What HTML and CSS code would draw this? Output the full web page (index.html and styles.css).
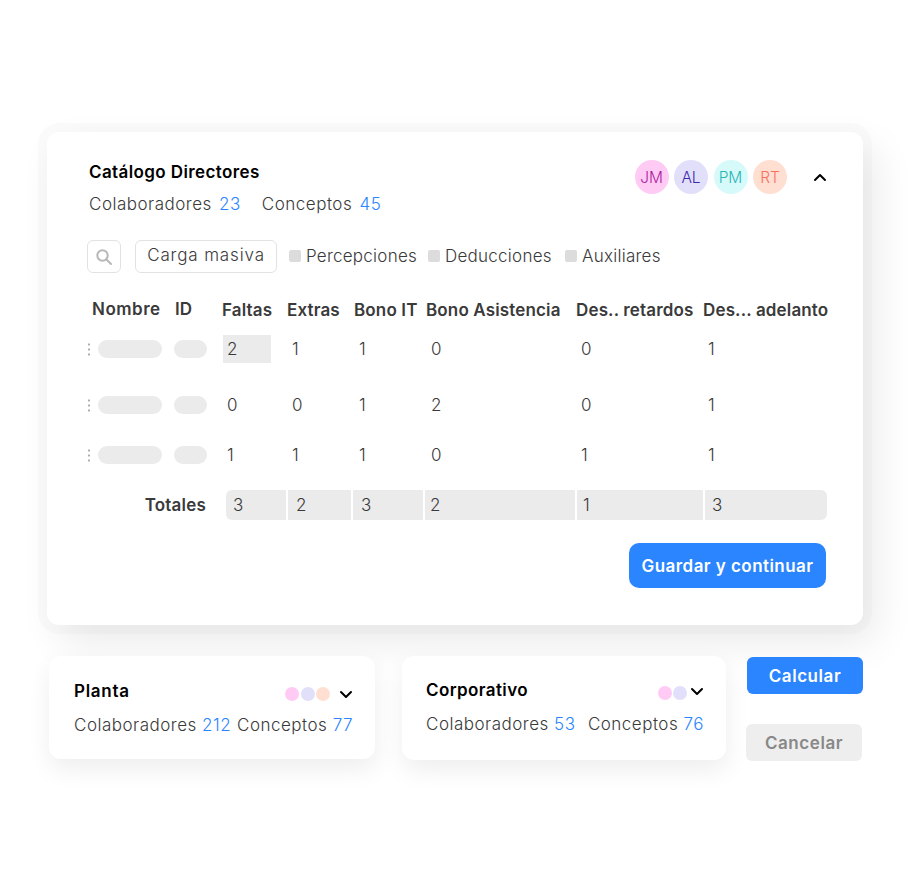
FILE: index.html
```html
<!DOCTYPE html>
<html lang="es">
<head>
    <meta charset="UTF-8">
    <meta name="viewport" content="width=device-width, initial-scale=1.0">
    <title>Catálogo Directores</title>
    <link rel="stylesheet" href="styles.css">
</head>
<body>
    <div class="stage">
        <section class="main-card">
            <header class="card-head">
                <div>
                    <h2 class="title">Catálogo Directores</h2>
                    <p class="stats">
                        <span class="stat">Colaboradores <b>23</b></span>
                        <span class="stat">Conceptos <b>45</b></span>
                    </p>
                </div>
                <div class="head-right">
                    <span class="avatar av-pink">JM</span>
                    <span class="avatar av-violet">AL</span>
                    <span class="avatar av-cyan">PM</span>
                    <span class="avatar av-peach">RT</span>
                    <svg class="chevron chevron-up" width="14" height="9" viewBox="0 0 14 9"><polyline points="2,7 7,2 12,7"/></svg>
                </div>
            </header>

            <div class="toolbar">
                <span class="search-btn">
                    <svg width="18" height="18" viewBox="0 0 18 18"><circle cx="7.5" cy="7.5" r="5.2"/><line x1="11.5" y1="11.5" x2="16" y2="16"/></svg>
                </span>
                <button class="bulk-btn">Carga masiva</button>
                <label class="check check-a"><i></i>Percepciones</label>
                <label class="check check-b"><i></i>Deducciones</label>
                <label class="check"><i></i>Auxiliares</label>
            </div>

            <div class="table">
                <div class="row row-head">
                    <span class="th-name">Nombre</span><span class="th-id">ID</span>
                    <span>Faltas</span><span>Extras</span><span>Bono IT</span><span>Bono Asistencia</span><span>Des.. retardos</span><span>Des... adelanto</span>
                </div>
                <div class="row row-1">
                    <span class="who"><i class="grip"></i><i class="pill pill-name"></i></span><span><i class="pill pill-id"></i></span>
                    <span class="num active">2</span><span class="num">1</span><span class="num">1</span><span class="num">0</span><span class="num">0</span><span class="num">1</span>
                </div>
                <div class="row row-2">
                    <span class="who"><i class="grip"></i><i class="pill pill-name"></i></span><span><i class="pill pill-id"></i></span>
                    <span class="num">0</span><span class="num">0</span><span class="num">1</span><span class="num">2</span><span class="num">0</span><span class="num">1</span>
                </div>
                <div class="row row-3">
                    <span class="who"><i class="grip"></i><i class="pill pill-name"></i></span><span><i class="pill pill-id"></i></span>
                    <span class="num">1</span><span class="num">1</span><span class="num">1</span><span class="num">0</span><span class="num">1</span><span class="num">1</span>
                </div>
                <div class="totals">
                    <span class="totals-label">Totales</span>
                    <span class="total t1">3</span><span class="total t2">2</span><span class="total t3">3</span><span class="total t4">2</span><span class="total t5">1</span><span class="total t6">3</span>
                </div>
            </div>

            <div class="save-row">
                <button class="btn-save">Guardar y continuar</button>
            </div>
        </section>

        <div class="bottom">
            <section class="mini-card mini-planta">
                <div class="mini-head">
                    <h3 class="mini-title">Planta</h3>
                    <span class="dots">
                        <i class="dot av-pink"></i><i class="dot av-violet"></i><i class="dot av-peach"></i>
                    </span>
                    <svg class="chevron" width="14" height="9" viewBox="0 0 14 9"><polyline points="2,2 7,7 12,2"/></svg>
                </div>
                <p class="mini-stats"><span>Colaboradores <b>212</b></span><span>Conceptos <b>77</b></span></p>
            </section>

            <section class="mini-card mini-corp">
                <div class="mini-head">
                    <h3 class="mini-title">Corporativo</h3>
                    <span class="dots">
                        <i class="dot av-pink"></i><i class="dot av-violet"></i>
                    </span>
                    <svg class="chevron" width="14" height="9" viewBox="0 0 14 9"><polyline points="2,2 7,7 12,2"/></svg>
                </div>
                <p class="mini-stats"><span>Colaboradores <b>53</b></span><span>Conceptos <b>76</b></span></p>
            </section>

            <div class="actions">
                <button class="btn-calc">Calcular</button>
                <button class="btn-cancel">Cancelar</button>
            </div>
        </div>
    </div>
</body>
</html>
```

FILE: styles.css
```css
* { box-sizing: border-box; }
html, body { margin: 0; background: #fff; }
body { font-family: "Inter", "Liberation Sans", sans-serif; font-size: 17px; font-weight: 350; color: #3a3a3a; overflow: hidden; }
h2, h3, p { margin: 0; }
i { display: block; font-style: normal; }
b { font-weight: 350; color: #2a85ff; }
button { font-family: inherit; cursor: pointer; }

.stage { width: 910px; height: 893px; padding: 132px 0 0 47px; }

/* tarjeta principal */
.main-card {
    width: 816px;
    height: 493px;
    padding: 28px 36px 0 40px;
    background: #fff;
    border-radius: 12px;
    box-shadow: 12px 16px 40px rgba(0, 0, 0, .09), 0 0 0 9px #fbfbfb;
}
.card-head { display: flex; justify-content: space-between; height: 80px; }
.title { margin-left: 2px; font-size: 17px; line-height: 24px; font-weight: 600; letter-spacing: .4px; color: #000; }
.stats { display: flex; gap: 21px; margin: 8px 0 0 2px; line-height: 24px; letter-spacing: .5px; }
.stat b { margin-left: 2px; }
.head-right { display: flex; align-items: flex-start; }
.avatar {
    display: flex;
    align-items: center;
    justify-content: center;
    width: 34px;
    height: 34px;
    margin-left: 5.5px;
    border-radius: 50%;
    font-size: 15.5px;
}
.av-pink { background: #ffcbf5; color: #ad1b9b; }
.av-violet { background: #e2dffa; color: #3a27ae; }
.av-cyan { background: #d6fafa; color: #2bb5b5; }
.av-peach { background: #ffdfd2; color: #fb6f5d; }
.chevron { fill: none; stroke: #000; stroke-width: 2; stroke-linecap: round; stroke-linejoin: round; }
.chevron-up { margin: 13px 0 0 26px; }

.toolbar { display: flex; align-items: center; height: 33px; letter-spacing: .25px; }
.search-btn {
    display: flex;
    align-items: center;
    justify-content: center;
    width: 34px;
    height: 33px;
    margin-right: 14px;
    border: 1px solid #e2e2e2;
    border-radius: 6px;
}
.search-btn svg { fill: none; stroke: #b8b8b8; stroke-width: 2; stroke-linecap: round; }
.bulk-btn {
    width: 142px;
    height: 33px;
    padding: 0 0 3px;
    margin-right: 12px;
    background: #fff;
    border: 1px solid #e2e2e2;
    border-radius: 6px;
    font-size: 17px;
    font-weight: 350;
    letter-spacing: .85px;
    color: #3a3a3a;
}
.check { display: flex; align-items: center; padding-bottom: 1px; }
.check-a { width: 139px; }
.check-b { width: 137px; }
.check i { width: 12px; height: 12px; margin-right: 5px; border-radius: 2px; background: #dcdcdc; }

/* tabla */
.table { margin-top: 25px; }
.row {
    display: grid;
    grid-template-columns: 87px 48px 65px 67px 72px 150px 127px 124px;
    align-items: center;
    height: 28px;
    margin-top: 22px;
}
.row-head { height: 24px; margin-top: 0; font-weight: 600; letter-spacing: .15px; white-space: nowrap; }
.row-1 { margin-top: 13px; }
.row-2 { margin-top: 28px; }
.th-name { padding-left: 5px; margin-top: -2px; letter-spacing: .5px; }
.th-id { padding-left: 1px; margin-top: -2px; }
.who { display: flex; align-items: center; gap: 8px; }
.grip { width: 2px; height: 15px; margin-left: 1px; background: radial-gradient(circle, #aaa 1px, transparent 1.2px) 0 0 / 2px 5px; }
.pill { height: 18px; border-radius: 9px; background: #ebebeb; }
.pill-name { width: 64px; }
.pill-id { width: 33px; }
.num { padding-left: 5px; }
.num.active { display: flex; align-items: center; width: 48px; height: 28px; margin-left: 1px; padding-left: 4px; background: #ebebeb; }

.totals { display: flex; gap: 2px; align-items: center; margin-top: 21px; }
.totals-label { width: 119px; margin-right: 18px; padding-bottom: 1px; text-align: right; font-weight: 600; letter-spacing: .2px; }
.total { display: flex; align-items: center; height: 30px; padding-bottom: 1px; background: #ebebeb; }
.t1 { width: 60px; padding-left: 7px; border-radius: 6px 0 0 6px; }
.t2 { width: 63px; padding-left: 8px; }
.t3 { width: 70px; padding-left: 8px; }
.t4 { width: 150px; padding-left: 5px; }
.t5 { width: 126px; padding-left: 6px; }
.t6 { width: 122px; padding-left: 7px; border-radius: 0 6px 6px 0; }

.save-row { display: flex; justify-content: flex-end; margin-top: 23px; padding-right: 1px; }
.btn-save {
    width: 197px;
    height: 45px;
    padding: 0;
    border: 0;
    border-radius: 10px;
    background: #2a85ff;
    color: #fff;
    font-size: 17px;
    font-weight: 600;
    letter-spacing: .45px;
}

/* fila inferior */
.bottom { display: flex; margin-top: 31px; }
.mini-card {
    height: 103px;
    padding: 23px 22px 0 25px;
    background: #fff;
    border-radius: 12px;
    box-shadow: 1px 10px 24px rgba(0, 0, 0, .07);
}
.mini-planta { width: 326px; margin: 0 27px 0 2px; }
.mini-corp { width: 324px; height: 104px; margin-right: 20px; padding: 22px 22px 0 24px; }
.mini-head { display: flex; align-items: center; height: 24px; }
.mini-title { flex: 1; font-size: 17px; font-weight: 600; color: #000; }
.mini-planta .mini-title { letter-spacing: .7px; }
.mini-corp .mini-title { letter-spacing: .4px; }
.dots { display: flex; gap: 1.5px; margin: 6px 9px 0 0; }
.dot { width: 14px; height: 14px; border-radius: 50%; }
.mini-head .chevron { margin-top: 6px; }
.mini-corp .dots { margin: 6px 3px 0 0; }
.mini-corp .mini-head .chevron { margin: 3px 0 0 0; }
.mini-stats { display: flex; justify-content: space-between; margin-top: 10px; line-height: 24px; letter-spacing: .5px; white-space: nowrap; }

.actions { display: flex; flex-direction: column; width: 117px; }
.btn-calc, .btn-cancel { height: 37px; padding: 0; border: 0; border-radius: 6px; font-size: 17px; font-weight: 600; letter-spacing: .55px; }
.btn-calc { width: 116px; margin: 1px 0 30px 1px; background: #2a85ff; color: #fff; }
.btn-cancel { width: 116px; background: #eee; color: #888; }
```
